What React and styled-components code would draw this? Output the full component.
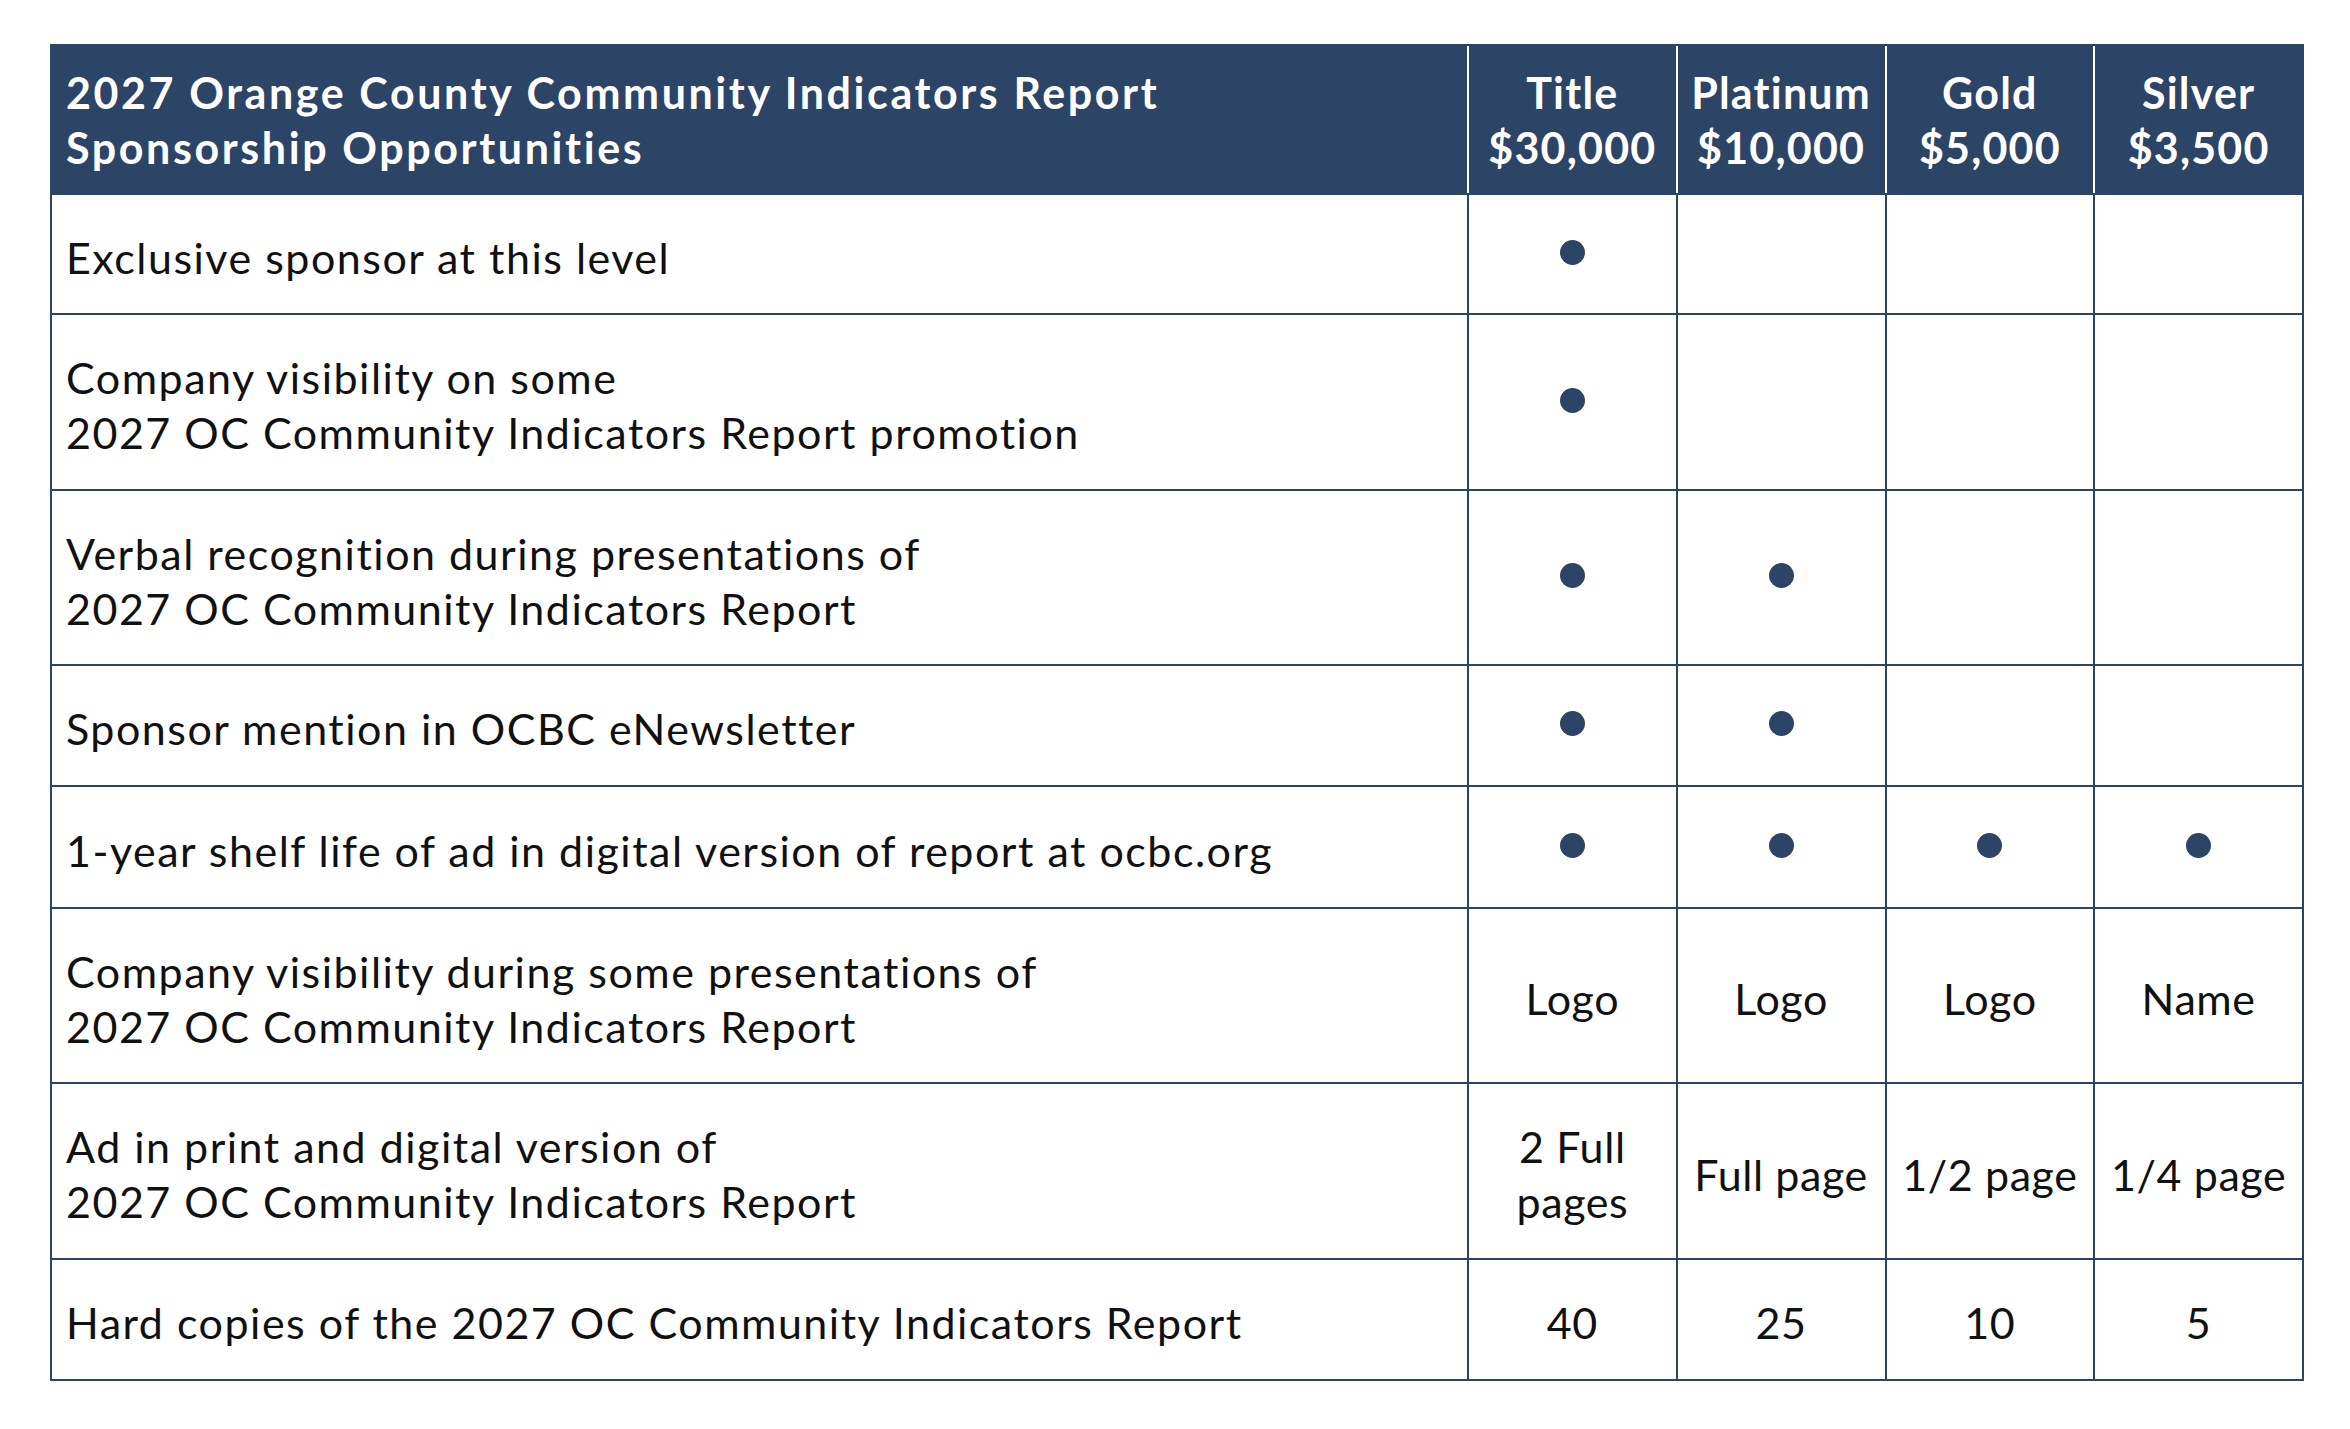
import React from "react";
import styled, { createGlobalStyle } from "styled-components";

const G = createGlobalStyle`
  body { margin: 0; background: #fff; font-family: "Lato", "Noto Sans", sans-serif; }
`;
const NAVY = "#2c4466";
const Wrap = styled.div`padding: 44px 0 0 50px;`;
const Table = styled.div`
  width: 2254px;
  display: grid;
  grid-template-columns: 1415px repeat(4, 1fr);
  border: 2px solid ${NAVY};
  box-sizing: border-box;
`;
const Head = styled.div`
  background: ${NAVY};
  color: #fff;
  font-weight: 700;
  font-size: 43px;
  letter-spacing: ${p => (p.$first ? "2.6px" : "1.2px")};
  line-height: 55px;
  height: 147px;
  box-sizing: border-box;
  display: flex;
  flex-direction: column;
  justify-content: center;
  align-items: ${p => (p.$first ? "flex-start" : "center")};
  text-align: ${p => (p.$first ? "left" : "center")};
  padding: 0 ${p => (p.$first ? "14px" : "0")};
  border-left: ${p => (p.$first ? "none" : "2px solid #fff")};
  white-space: nowrap;
`;
const Cell = styled.div`
  height: ${p => p.$h}px;
  box-sizing: border-box;
  border-top: 2px solid ${NAVY};
  border-left: ${p => (p.$first ? "none" : `2px solid ${NAVY}`)};
  display: flex;
  flex-direction: column;
  justify-content: center;
  align-items: ${p => (p.$first ? "flex-start" : "center")};
  text-align: ${p => (p.$first ? "left" : "center")};
  padding: 6px ${p => (p.$first ? "14px" : "0")} 0;
  font-size: 43px;
  letter-spacing: ${p => (p.$first ? "1.5px" : "0.6px")};
  line-height: 55px;
  color: #111;
  white-space: nowrap;
`;
const Dot = styled.span`
  width: 25px; height: 25px; border-radius: 50%;
  background: ${NAVY}; display: block; margin-top: -10px;
`;

const D = "dot";
const rows = [
  [120, ["Exclusive sponsor at this level"], [D, "", "", ""]],
  [176, ["Company visibility on some", "2027 OC Community Indicators Report promotion"], [D, "", "", ""]],
  [175, ["Verbal recognition during presentations of", "2027 OC Community Indicators Report"], [D, D, "", ""]],
  [121, ["Sponsor mention in OCBC eNewsletter"], [D, D, "", ""]],
  [122, ["1-year shelf life of ad in digital version of report at ocbc.org"], [D, D, D, D]],
  [175, ["Company visibility during some presentations of", "2027 OC Community Indicators Report"], ["Logo", "Logo", "Logo", "Name"]],
  [176, ["Ad in print and digital version of", "2027 OC Community Indicators Report"], [["2 Full", "pages"], "Full page", "1/2 page", "1/4 page"]],
  [121, ["Hard copies of the 2027 OC Community Indicators Report"], ["40", "25", "10", "5"]],
];
const heads = [["Title", "$30,000"], ["Platinum", "$10,000"], ["Gold", "$5,000"], ["Silver", "$3,500"]];

export default function App() {
  return (
    <Wrap>
      <G />
      <Table>
        <Head $first>
          <div>2027 Orange County Community Indicators Report</div>
          <div>Sponsorship Opportunities</div>
        </Head>
        {heads.map((h, i) => (
          <Head key={i}><div>{h[0]}</div><div>{h[1]}</div></Head>
        ))}
        {rows.map(([h, label, vals], r) => (
          <React.Fragment key={r}>
            <Cell $first $h={h}>{label.map((l, i) => <div key={i}>{l}</div>)}</Cell>
            {vals.map((v, i) => (
              <Cell key={i} $h={h}>
                {v === D ? <Dot /> : Array.isArray(v) ? v.map((x, j) => <div key={j}>{x}</div>) : v}
              </Cell>
            ))}
          </React.Fragment>
        ))}
      </Table>
    </Wrap>
  );
}
